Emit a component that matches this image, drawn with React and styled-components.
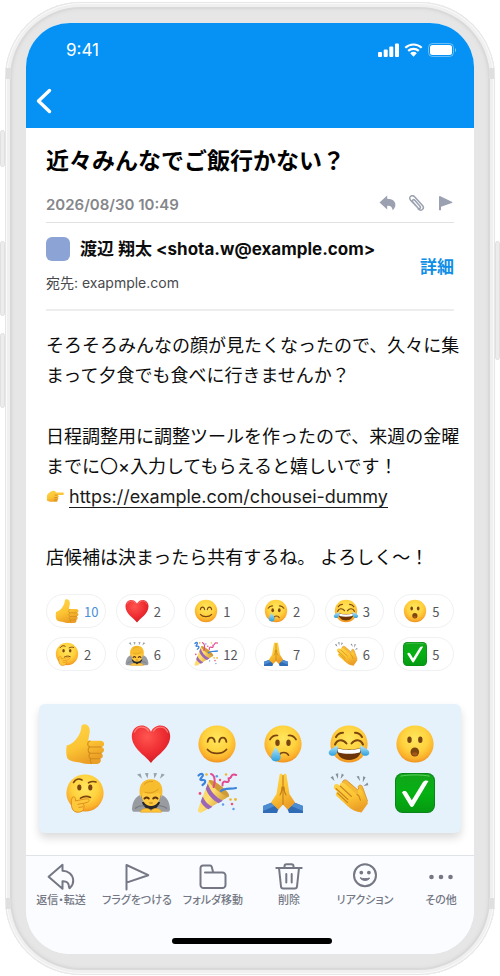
import React, { useState } from "react";
import styled, { createGlobalStyle } from "styled-components";

const GlobalStyle = createGlobalStyle`
  * {
    box-sizing: border-box;
  }

  body {
    margin: 0;
    background-color: #ffffff;
    color: #0c0c0c;
    font-family: Inter, "Noto Sans CJK JP", sans-serif;
  }

  button {
    padding: 0;
    border: 0;
    background: none;
    color: inherit;
    font-family: inherit;
    cursor: pointer;
  }
`;

const Page = styled.main`
  display: flex;
  justify-content: center;
  padding: 2px 5px;
`;

const Phone = styled.div`
  position: relative;
  width: 100%;
  max-width: 490px;
  padding: 21px;
  border-radius: 76px;
  background-color: #e6e6e6;
  box-shadow: inset 0 0 0 1px #e6e6e6, inset 0 0 0 2px #fafafa,
    inset 0 0 0 5px #f0f0f0, inset 0 0 1px 7px #d9d9d9,
    inset 0 0 2px 9px #e2e2e2;
`;

const SideKey = styled.span`
  position: absolute;
  top: ${(props) => props.$top}px;
  ${(props) => props.$side}: -5px;
  width: 5px;
  height: ${(props) => props.$height}px;
  border: 1px solid #e0e0e0;
  border-radius: 3px;
  background-color: #ececec;
`;

const Antenna = styled.span`
  position: absolute;
  ${(props) => props.$edge}: 66px;
  ${(props) => props.$side}: 1px;
  width: 5px;
  height: 11px;
  background-color: #dfdfdf;
`;

const Screen = styled.div`
  display: flex;
  flex-direction: column;
  overflow: hidden;
  border-radius: 44px;
  background-color: #ffffff;
`;

const Header = styled.header`
  height: 105px;
  padding: 17px 18px 0 10px;
  background-color: #0592f4;
  color: #ffffff;
`;

const StatusBar = styled.div`
  display: flex;
  align-items: center;
  justify-content: space-between;
  height: 20px;
  padding-left: 30px;
  font-size: 17px;
`;

const StatusIcons = styled.div`
  display: flex;
  align-items: center;
  gap: 5px;
`;

const BackButton = styled.button`
  display: block;
  width: 16px;
  height: 26px;
  margin-top: 28px;
`;

const Article = styled.article`
  padding: 17px 20px 0;
`;

const Title = styled.h1`
  margin: 0;
  font-size: 23px;
  font-weight: 700;
  line-height: 32px;
  color: #000000;
`;

const MetaRow = styled.div`
  display: flex;
  align-items: center;
  justify-content: space-between;
  height: 46px;
  padding-top: 10px;
  border-bottom: 1px solid #e1e1e3;
`;

const SentAt = styled.time`
  font-size: 15px;
  font-weight: 600;
  color: #85868a;
`;

const MetaActions = styled.div`
  display: flex;
  gap: 12px;
  color: #9ba1b0;
`;

const MetaButton = styled.button`
  width: 17px;
  height: 24px;
`;

const SenderRow = styled.div`
  display: flex;
  align-items: center;
  justify-content: space-between;
  height: 88px;
  padding-bottom: 1px;
  border-bottom: 2px solid #ededee;
`;

const Sender = styled.div`
  display: flex;
  flex-direction: column;
  gap: 11px;
`;

const SenderName = styled.div`
  display: flex;
  align-items: center;
  gap: 10px;
  font-size: 17px;
  font-weight: 700;
  line-height: 24px;
  white-space: nowrap;
`;

const Avatar = styled.span`
  width: 24px;
  height: 24px;
  border-radius: 6px;
  background-color: #8ba4d5;
`;

const Recipient = styled.div`
  font-size: 14px;
  line-height: 22px;
  color: #48494d;
`;

const DetailLink = styled.a`
  color: #0f8ee6;
  font-size: 17px;
  font-weight: 700;
  text-decoration: none;
  white-space: nowrap;
`;

const Body = styled.div`
  display: flex;
  flex-direction: column;
  gap: 31px;
  padding-top: 20px;
  font-size: 18px;
  line-height: 30px;
  white-space: nowrap;

  p {
    margin: 0;
  }

  a {
    color: #1c1c1c;
    text-decoration: none;
    border-bottom: 1px solid #1c1c1c;
  }
`;

const Reactions = styled.div`
  display: grid;
  grid-template-columns: repeat(6, 1fr);
  gap: 9px 10px;
  padding-top: 21px;
`;

const Chip = styled.button`
  display: flex;
  align-items: center;
  gap: 5px;
  height: 34px;
  padding-left: 8px;
  border: 1px solid #f0f1f2;
  border-radius: 17px;
  font-family: "Noto Sans CJK JP", sans-serif;
  font-size: 13px;
  color: ${(props) => (props.$active ? "#4a8fd9" : "#55565a")};
`;

const Picker = styled.section`
  display: grid;
  grid-template-columns: repeat(6, 1fr);
  gap: 9px 0;
  margin: 33px 13px 22px;
  padding: 20px 13px;
  border-radius: 6px;
  background-color: #e5f1fb;
  box-shadow: 0 5px 8px rgba(0, 0, 0, 0.14);
`;

const PickerButton = styled.button`
  display: flex;
  justify-content: center;
  height: 40px;
`;

const Toolbar = styled.nav`
  display: grid;
  grid-template-columns: repeat(6, 1fr);
  height: 83px;
  margin: 0 -5px 0 -3px;
  padding-top: 7px;
  border-top: 1px solid #dfe2e6;
  background-color: #fafcff;
`;

const ToolButton = styled.button`
  display: flex;
  flex-direction: column;
  align-items: center;
  justify-self: center;
  gap: 1px;
  height: 46px;
  color: #757884;
  font-size: 11px;
  font-weight: 500;
  line-height: 16px;
  font-feature-settings: "palt";
  white-space: nowrap;
`;

const HomeArea = styled.div`
  display: flex;
  justify-content: center;
  height: 16px;
  padding-left: 3px;
  background-color: #fafcff;
`;

const HomeIndicator = styled.span`
  width: 160px;
  height: 6px;
  border-radius: 3px;
  background-color: #000000;
`;

const EmojiSvg = styled.svg`
  display: block;
  flex: none;
  width: ${(props) => props.$size}px;
  height: ${(props) => props.$size}px;
  overflow: visible;
`;

const InlineEmoji = styled(EmojiSvg)`
  display: inline-block;
  margin-right: 5px;
  vertical-align: -2px;
`;

const Defs = styled.svg`
  position: absolute;
  width: 0;
  height: 0;
`;

function EmojiDefs() {
  return (
    <Defs aria-hidden="true">
      <defs>
        <radialGradient id="face" cx="0.5" cy="0.36" r="0.64">
          <stop offset="0" stopColor="#ffe75e" />
          <stop offset="0.55" stopColor="#ffd23e" />
          <stop offset="0.85" stopColor="#fbb02b" />
          <stop offset="1" stopColor="#ee9220" />
        </radialGradient>
        <linearGradient id="skin" x1="0" y1="0" x2="0.4" y2="1">
          <stop offset="0" stopColor="#ffd54a" />
          <stop offset="0.6" stopColor="#fcc433" />
          <stop offset="1" stopColor="#ec9f26" />
        </linearGradient>
        <radialGradient id="heart" cx="0.4" cy="0.3" r="0.75">
          <stop offset="0" stopColor="#ff5550" />
          <stop offset="0.6" stopColor="#ee2c31" />
          <stop offset="1" stopColor="#cf1b26" />
        </radialGradient>
        <linearGradient id="tear" x1="0" y1="0" x2="0" y2="1">
          <stop offset="0" stopColor="#b9e9fa" />
          <stop offset="1" stopColor="#2c9fdc" />
        </linearGradient>
        <linearGradient id="cone" x1="0" y1="0" x2="1" y2="0.6">
          <stop offset="0" stopColor="#f5cb4c" />
          <stop offset="0.5" stopColor="#ffdf72" />
          <stop offset="1" stopColor="#cf962a" />
        </linearGradient>
        <linearGradient id="check" x1="0" y1="0" x2="0" y2="1">
          <stop offset="0" stopColor="#13a51c" />
          <stop offset="0.5" stopColor="#04b112" />
          <stop offset="1" stopColor="#069a12" />
        </linearGradient>
      </defs>
    </Defs>
  );
}

const brown = "#7a4510";

const face = <circle cx="20" cy="20" r="18.6" fill="url(#face)" />;

const drawings = {
  thumb: (
    <>
      <path
        d="M1.7 21.5C6 20.5 9.500 17.500 12 14c2.600-3.600 4-6.600 4.200-10.500C16.400 1 18 0 20 .3c3.600.6 5 3.700 4.700 7.700-.3 3.300-1.200 5.800-1.400 8.700H35c5.200 0 5.300 5.700 1.500 6.300 3.600.8 3.300 5.800-.4 6.200 2.600 1.200 2.200 5.200-1 5.600 1.600 1.400.7 4.700-3.100 5.100-6.500.4-12.700.2-17-1.300-5-.7-9-1-12.200-3.600C.9 31.500 1 26 1.700 21.500Z"
        fill="url(#skin)"
      />
      <path
        d="M25 17c-3 .8-3.200 5 0 6-2.600 1-2.500 5.200.4 6.200-2.200 1.200-1.900 4.800.6 5.600-1.200 1-1 3.500.6 4.500M25 23h11M25.400 29.200H36M26 34.800h9"
        fill="none"
        stroke="#cf8a1c"
        strokeWidth="1.1"
        strokeLinecap="round"
      />
    </>
  ),
  heart: (
    <>
      <path
        d="M20 39C15 32 .8 24.500.8 12.300.8 6 5.200 1.500 10.600 1.500c4.200 0 7.500 2.300 9.400 6.200 1.900-3.900 5.200-6.200 9.400-6.200 5.400 0 9.800 4.500 9.800 10.800C39.200 24.500 25 32 20 39Z"
        fill="url(#heart)"
      />
      <path
        d="M3.500 8C5 4.700 7.500 3.200 10.500 3.200c3 0 5.500 1.300 7 3.800M22.500 7c1.600-2.600 4-3.800 7-3.800s5.500 1.500 7 4.800"
        fill="none"
        stroke="#ff9c94"
        strokeWidth="1.3"
        strokeLinecap="round"
        opacity="0.7"
      />
    </>
  ),
  smile: (
    <>
      {face}
      <path
        d="M10.600 17.800c.8-5.700 6.400-5.700 7.200 0M22.200 17.800c.8-5.700 6.400-5.700 7.200 0M10.500 25.500c4.500 5.200 14.500 5.200 19 0"
        fill="none"
        stroke={brown}
        strokeWidth="1.800"
        strokeLinecap="round"
      />
    </>
  ),
  cry: (
    <>
      {face}
      <g fill={brown}>
        <ellipse cx="14.500" cy="18.800" rx="2.200" ry="3.300" />
        <ellipse cx="25.500" cy="18.800" rx="2.200" ry="3.300" />
      </g>
      <path
        d="M7 15.500c2-3.200 4.500-4.300 7.500-4M25.500 11.500c3-.3 5.500.8 7.500 4M16 31.200c2-3.600 7.500-3.600 9.500 0"
        fill="none"
        stroke={brown}
        strokeWidth="1.700"
        strokeLinecap="round"
      />
      <path
        d="M12.800 22.500c2 4 4.900 7.500 4.900 10.300 0 2.800-2.300 4.700-4.900 4.700S8 35.600 8 32.800c0-2.800 2.900-6.300 4.800-10.300Z"
        fill="url(#tear)"
      />
    </>
  ),
  laugh: (
    <>
      {face}
      <path
        d="M7 13c1.500-2.800 4-4.200 7-4.200M26 8.800c3 0 5.500 1.400 7 4.200M6 20.500c2.500-5.500 8-5.500 11.500-1M22.500 19.500c3.500-4.500 9-4.500 11.500 1"
        fill="none"
        stroke={brown}
        strokeWidth="2"
        strokeLinecap="round"
      />
      <path d="M7.500 23.500c8 2.700 17 2.700 25 0 .5 7-4.500 12.500-12.500 12.500S7 30.500 7.500 23.500Z" fill="#6d3507" />
      <path d="M8.500 24.300c7 2.200 16 2.200 23 0 .1 1.600-.2 2.900-.8 4.200-6.500 1.700-14.900 1.700-21.400 0-.6-1.300-.9-2.600-.8-4.200Z" fill="#ffffff" />
      <path
        d="M8.500 21.300c.6 4 .3 8.300-2.600 9.900-2.200 1.200-5 .6-6-1.500-1.300-3.500 4.300-5.700 8.600-8.400ZM31.500 21.300c-.6 4-.3 8.300 2.600 9.900 2.200 1.200 5 .6 6-1.500 1.300-3.500-4.300-5.700-8.600-8.400Z"
        fill="url(#tear)"
      />
    </>
  ),
  wow: (
    <>
      {face}
      <g fill={brown}>
        <ellipse cx="14.500" cy="15.800" rx="2.200" ry="3.200" />
        <ellipse cx="25.300" cy="15.800" rx="2.200" ry="3.200" />
        <ellipse cx="19.800" cy="28" rx="4.300" ry="4.600" />
      </g>
      <ellipse cx="19.800" cy="30" rx="2.800" ry="1.800" fill="#a5571a" />
    </>
  ),
  think: (
    <>
      {face}
      <g fill={brown}>
        <ellipse cx="14.300" cy="14.500" rx="2.100" ry="3" />
        <ellipse cx="25.300" cy="14.500" rx="2.100" ry="3" />
      </g>
      <path
        d="M8.500 9.500c2-3.300 5.500-4.200 8.500-2.500M23.500 9.800c2.500-1.300 5-1.600 7.500-.8M15.500 25.200c3-2 6.500-2.500 10-.7"
        fill="none"
        stroke={brown}
        strokeWidth="1.600"
        strokeLinecap="round"
      />
      <path
        d="M6.500 32.500c-.4-3.400-.2-7.200 1.200-8.400 1.900-1 2.900.8 2.800 3.800 3.800-.6 8.800-2.300 12-2.100 2.600.3 2.200 2.800-.2 3.500l-4.800 1.400c1.300.9 1.800 2.100 1.300 3.500.4 3.500-3.100 5.300-6.800 5-3.500-.3-5.200-3.300-5.500-6.700Z"
        fill="#ffc83a"
        stroke="#dd8f1f"
        strokeWidth="1"
      />
      <path d="M12.500 31.500l5-1.200M13.500 34.500l4.500-.8" stroke="#dd8f1f" strokeWidth="1" />
    </>
  ),
  bow: (
    <>
      <path
        d="M6 1.500l3.600-1 1.400 5.200ZM13.800.3l3.600-.3-.8 5.500ZM22.600 0l3.600.3-2.800 5.200ZM30.600.5l3.200 1.200-4.900 4.100Z"
        fill="#98a2a9"
      />
      <path
        d="M9.500 22C4 23.500 1.200 30 1 36c0 2 1 2.800 3 2.800h32c2 0 3-.8 3-2.800-.2-6-3-12.500-8.500-14Z"
        fill="#989ca1"
      />
      <path d="M11 29c1.500 5.500 5 7.500 9 7.500s7.500-2 9-7.500Z" fill="#29272a" />
      <path d="M4 35.500c3-2.500 6-3.200 9.500-2.500M36 35.500c-3-2.500-6-3.200-9.500-2.500" fill="none" stroke="#767b81" strokeWidth="1.200" />
      <path
        d="M10.500 18c-.5 9.500 3.500 15 9.500 15s10-5.500 9.500-15Z"
        fill="#ffc93e"
      />
      <path
        d="M9.500 25C6.500 14 10.500 6.300 20 6.300S33.500 14 30.500 25c-.6-2.600-1.500-4-3-5.200-5.500 2-11.500 1.500-14.500-.8-1.500 1.500-2.800 3.200-3.500 6Z"
        fill="#f7bd2e"
      />
      <path
        d="M13.500 19.200c5 1.500 10 .5 14-3.200M13 11.500c2.500-2.500 5.500-3.500 9-3"
        fill="none"
        stroke="#d9951f"
        strokeWidth="0.900"
      />
      <path
        d="M13.500 25.500c1.300-1.200 3-1.200 4.300 0M22.200 25.500c1.300-1.200 3-1.200 4.300 0"
        fill="none"
        stroke="#5c3110"
        strokeWidth="1.900"
        strokeLinecap="round"
      />
      <path d="M18.300 30h3.400" stroke="#b56b18" strokeWidth="1.100" />
      <path
        d="M9.500 39.200c0-4.200 8.500-5 10-1.800l.5.700.5-.7c1.500-3.200 10-2.400 10 1.800Z"
        fill="#ffc535"
        stroke="#df9a26"
        strokeWidth="0.600"
      />
    </>
  ),
  party: (
    <>
      <path
        d="M1 36.500 11.800 7.500C15 4 34.500 20 31.800 23.500L4.500 39.500C2.500 40.500.300 38.500 1 36.500Z"
        fill="url(#cone)"
      />
      <path
        d="M10.800 10.500c2.500 7.500 8 14 15 17.200l-4.300 2.500C15.500 27 11 22 8.800 15.800ZM5.700 23.500c2 4.700 5.300 8.500 9.800 10.300l-4 2.400c-3.500-1.600-6.200-4.300-7.800-7.800Z"
        fill="#9b66b8"
      />
      <path d="M11.800 7.500c2.500-3.300 22.500 12.500 20 16-3.500 1-19.500-11.500-20-16Z" fill="#cf9a38" />
      <path
        d="M1.500 2.500c3-3 5.500-1.500 3.800 1C3.600 6 1.500 7.500 6 7c3-.3 3 3-.5 5M24 18c4.500-4 8.500-1.500 15-3"
        fill="none"
        stroke="#3c83dc"
        strokeWidth="2.200"
        strokeLinecap="round"
      />
      <path
        d="M14 1c4.200 1 4.500 8.500 2.500 13M25.500 12.500c-.5-4 2-4.500 4.200-3.500 2.500.8 3-3.500 1-3.500 3 .5 3.500-1.500 4-3 1.200-2 2.800-1 4.500-.5"
        fill="none"
        stroke="#e34b91"
        strokeWidth="2"
        strokeLinecap="round"
      />
      <g fill="#5b9be8">
        <circle cx="19.800" cy="3.200" r="1.300" />
        <circle cx="26" cy="31.500" r="1.200" />
        <circle cx="36.500" cy="36" r="1.200" />
      </g>
      <g fill="#ea5178">
        <circle cx="3" cy="20.500" r="1.400" />
        <circle cx="23" cy="7" r="1.200" />
        <circle cx="35" cy="31" r="1.300" />
      </g>
      <g fill="#f0b52f">
        <circle cx="9.500" cy="1.500" r="1.300" />
        <circle cx="38.500" cy="26.500" r="1.400" />
        <circle cx="33.500" cy="26.500" r="1.300" />
        <circle cx="29" cy="1.500" r="1.200" />
      </g>
    </>
  ),
  pray: (
    <>
      <path d="M0 33 10 29l5.500 7-1.500 4H0ZM40 33 30 29l-5.500 7 1.500 4h14Z" fill="#2f6cb5" />
      <path d="M0 33 10 29l3 3.500L0 38ZM40 33 30 29l-3 3.500L40 38Z" fill="#4c8cd3" />
      <path
        d="M20 2.500C19 .2 16.700.2 16.400 2.800L13.500 21 8 29.500l7.300 7.300L20 31.500l4.700 5.300L32 29.500 26.500 21 23.600 2.800C23.300.2 21 .2 20 2.500Z"
        fill="url(#skin)"
      />
      <path
        d="M20 2.500V31.500M17 22c1.500-2 2-4.500 2-8M23 22c-1.500-2-2-4.500-2-8"
        fill="none"
        stroke="#c47d1c"
        strokeWidth="1.100"
        strokeLinecap="round"
      />
    </>
  ),
  clap: (
    <>
      <path
        d="M1.500 4.500 4 3l1.500 5ZM6.500 1l2.700-.8L9 6ZM12.800.5 15 2l-3.500 4ZM27.500 3.500 30 3l1.200 5.200ZM34 3.200l2.600 1-2.800 5.300ZM38.500 9.500l.8 2.700-4.800.8Z"
        fill="#87909a"
      />
      <path
        d="M13.500 10.500C12.800 7 16.500 5.800 18.500 8L30 18l-.8-3.800c.2-3 4-2.600 4.500.3L38.500 28 34 34Z"
        fill="#f5b834"
        stroke="#d28c20"
        strokeWidth="0.800"
      />
      <path
        d="M5.200 12.500c1.500-2.700 4.300-1.300 6 .5-.8-3.200 2-4.600 4.300-2.500L28 21.500l1.800 1.300-1-4.500c0-3 3.700-3 4.400 0 .8 5.500 4.300 8.700 5.800 12L32.500 39.500c-5.500-1-10-2.500-14-6.500L7.800 23.300c-2.300-2.500-.2-5 1.700-3.700-3.500-2.600-5.500-4.600-4.300-7.100Z"
        fill="url(#skin)"
      />
      <path
        d="M11.200 13 22.500 23.500M7 15.500l12 11M8.500 20l10 9.500M28 21.500l1.800 1.300 1.700 4.500"
        fill="none"
        stroke="#cc861d"
        strokeWidth="1.100"
        strokeLinecap="round"
      />
    </>
  ),
  done: (
    <>
      <rect x="0" y="0" width="40" height="40" rx="7.500" fill="#098618" />
      <rect x="1" y="1" width="38" height="38" rx="6.500" fill="url(#check)" />
      <path d="M5.500 3.200C12 1.500 28 1.500 34.500 3.200" stroke="#5ccf61" strokeWidth="1" fill="none" />
      <path d="M7 19.500c1.500-2 4-2 5.200.2l4.600 7.500L28 9c1-1.600 3.500-2 5.500-1L18.500 33c-.8 1.300-2.500 1.300-3.300 0Z" fill="#ffffff" />
    </>
  ),
  point: (
    <>
      <path
        d="M2 19c3-5 8-9.500 14-10.500 2.500-.5 5.500 1 6.500 3.500H37c3.500 0 3.500 6 0 6H26c3.500 1.500 3 5 0 5.500 2.500 1.500 2 5-1 5.300 1.500 1.500.5 4.200-2.500 4.200H13c-4 0-8-1-11-3Z"
        fill="url(#skin)"
      />
      <path d="M19 18h7M18 23.500h8M18 28.800h7" stroke="#c8811c" strokeWidth="1.600" />
    </>
  ),
};

function Emoji({ name, size, label }) {
  return (
    <EmojiSvg $size={size} viewBox="0 0 40 40" role="img" aria-label={label}>
      {drawings[name]}
    </EmojiSvg>
  );
}

const emojis = [
  { name: "thumb", label: "いいね", count: 10 },
  { name: "heart", label: "ハート", count: 2 },
  { name: "smile", label: "笑顔", count: 1 },
  { name: "cry", label: "泣き顔", count: 2 },
  { name: "laugh", label: "大笑い", count: 3 },
  { name: "wow", label: "驚き", count: 5 },
  { name: "think", label: "考え中", count: 2 },
  { name: "bow", label: "お辞儀", count: 6 },
  { name: "party", label: "お祝い", count: 12 },
  { name: "pray", label: "お願い", count: 7 },
  { name: "clap", label: "拍手", count: 6 },
  { name: "done", label: "完了", count: 5 },
];

const tools = [
  {
    label: "返信・転送",
    icon: (
      <path d="M15.500 1.800 1.600 13.800 15.500 25.800V18.300C20 18 21.800 20 22 24c.1 1.300.5 1.500 1.300.6C25 22.800 26.500 20 26.200 17 25.700 11.500 21 7.800 15.500 7.800Z" />
    ),
  },
  {
    label: "フラグをつける",
    icon: <path d="M3.500 26.500V2L25.300 12.200 3.500 19.600" />,
  },
  {
    label: "フォルダ移動",
    icon: (
      <path d="M6 9.500h17.500A3 3 0 0 1 26.500 12.500V22a3 3 0 0 1-3 3h-19a3 3 0 0 1-3-3V5a2.500 2.500 0 0 1 2.500-2.500h7.200c.8 0 1.300.5 1.500 1.200L14.200 9.500" />
    ),
  },
  {
    label: "削除",
    icon: (
      <path d="M1.300 5h25.400M9.500 5V3.200c0-1.100.9-2 2-2h5c1.100 0 2 .9 2 2V5M4 5l2 18.500c.1 1.300 1 2 2.200 2h11.600c1.200 0 2.100-.7 2.200-2L24 5M11.300 11v8.500M16.700 11v8.500" />
    ),
  },
  {
    label: "リアクション",
    icon: (
      <>
        <circle cx="14" cy="12.300" r="11" />
        <circle cx="10.300" cy="9.600" r="0.900" />
        <circle cx="17.900" cy="9.600" r="0.900" />
        <path d="M9.500 15c3 .9 6 .9 9 0-.8 3.300-8.200 3.300-9 0Z" fill="currentColor" strokeWidth="1" />
      </>
    ),
  },
  {
    label: "その他",
    icon: (
      <g fill="currentColor" stroke="none">
        <circle cx="4.500" cy="14" r="2.300" />
        <circle cx="14" cy="14" r="2.300" />
        <circle cx="23.500" cy="14" r="2.300" />
      </g>
    ),
  },
];

function StatusGlyphs() {
  return (
    <StatusIcons aria-hidden="true">
      <svg width="21" height="14" viewBox="0 0 21 14" fill="currentColor">
        <rect x="0" y="9" width="4" height="5" rx="1" />
        <rect x="5.700" y="6.500" width="4" height="7.500" rx="1" />
        <rect x="11.300" y="3.500" width="4" height="10.500" rx="1" />
        <rect x="17" y="0.500" width="4" height="13.500" rx="1" />
      </svg>
      <svg width="19" height="14" viewBox="0 0 19 14">
        <path
          d="M1.300 4.800a11.800 11.800 0 0 1 16.400 0M4.200 7.900a7.700 7.700 0 0 1 10.600 0"
          fill="none"
          stroke="currentColor"
          strokeWidth="2.200"
        />
        <path d="M6.200 10.200a4.700 4.700 0 0 1 6.600 0L9.500 13.800Z" fill="currentColor" />
      </svg>
      <svg width="28" height="14" viewBox="0 0 28 14">
        <rect x="0.500" y="0.500" width="25" height="13" rx="4" fill="none" stroke="#ffffff" opacity="0.400" />
        <rect x="2" y="2" width="22" height="10" rx="2.500" fill="#ffffff" />
        <path d="M27 5c1.300.8 1.300 3.400 0 4.200Z" fill="#ffffff" opacity="0.500" />
      </svg>
    </StatusIcons>
  );
}

function MailScreen() {
  const [picked, setPicked] = useState("thumb");

  return (
    <Screen>
      <Header>
        <StatusBar>
          <span>9:41</span>
          <StatusGlyphs />
        </StatusBar>
        <BackButton aria-label="戻る">
          <svg width="16" height="26" viewBox="0 0 16 26">
            <path
              d="M13.500 2.500 2.500 13l11 10.500"
              fill="none"
              stroke="#ffffff"
              strokeWidth="3.400"
              strokeLinecap="round"
              strokeLinejoin="round"
            />
          </svg>
        </BackButton>
      </Header>
      <Article>
        <Title>近々みんなでご飯行かない？</Title>
        <MetaRow>
          <SentAt>2026/08/30 10:49</SentAt>
          <MetaActions>
            <MetaButton aria-label="返信">
              <svg width="17" height="17" viewBox="0 0 17 17" fill="currentColor">
                <path d="M8.200.6.500 7.500l7.700 7V10.700c3.400-.2 5 1.200 5.500 4.500 4.800-4.500 3.300-11.200-5.500-11.400Z" />
              </svg>
            </MetaButton>
            <MetaButton aria-label="添付ファイル">
              <svg width="17" height="17" viewBox="0 0 17 17" fill="none">
                <path
                  d="M6.800 5.200 12 11.300c1.300 1.600-.7 3.200-2 1.800L2.600 5.300C-.2 1.800 4.200-.9 6.800 1.900l7.700 8.600c2.500 3.100-1.300 6.400-4.300 3.500M10 13.100 5 7.300C3.500 5.500 5.300 3.800 6.800 5.200"
                  stroke="currentColor"
                  strokeWidth="1.500"
                  strokeLinecap="round"
                />
              </svg>
            </MetaButton>
            <MetaButton aria-label="フラグ">
              <svg width="17" height="17" viewBox="0 0 17 17" fill="currentColor">
                <path d="M2 2c0-.8.600-1.200 1.400-.8L14.800 6.700c.7.400.7 1 0 1.300L4 11.800V14.500c0 1.200-2 1.200-2 0Z" />
              </svg>
            </MetaButton>
          </MetaActions>
        </MetaRow>
        <SenderRow>
          <Sender>
            <SenderName>
              <Avatar />
              <span>渡辺 翔太 &lt;shota.w@example.com&gt;</span>
            </SenderName>
            <Recipient>宛先: exapmple.com</Recipient>
          </Sender>
          <DetailLink href="#detail">詳細</DetailLink>
        </SenderRow>
        <Body>
          <p>
            そろそろみんなの顔が見たくなったので、久々に集
            <br />
            まって夕食でも食べに行きませんか？
          </p>
          <p>
            日程調整用に調整ツールを作ったので、来週の金曜
            <br />
            までに〇×入力してもらえると嬉しいです！
            <br />
            <InlineEmoji $size={18} viewBox="0 0 40 40" aria-hidden="true">
              {drawings.point}
            </InlineEmoji>
            <a href="#chousei">https://example.com/chousei-dummy</a>
          </p>
          <p>店候補は決まったら共有するね。 よろしく〜！</p>
        </Body>
        <Reactions>
          {emojis.map((emoji) => (
            <Chip
              key={emoji.name}
              $active={picked === emoji.name}
              onClick={() => setPicked(emoji.name)}
            >
              <Emoji name={emoji.name} label={emoji.label} size={24} />
              {emoji.count}
            </Chip>
          ))}
        </Reactions>
      </Article>
      <Picker>
        {emojis.map((emoji) => (
          <PickerButton key={emoji.name} onClick={() => setPicked(emoji.name)}>
            <Emoji name={emoji.name} label={emoji.label} size={40} />
          </PickerButton>
        ))}
      </Picker>
      <Toolbar>
        {tools.map((tool) => (
          <ToolButton key={tool.label}>
            <svg
              width="28"
              height="28"
              viewBox="0 0 28 28"
              fill="none"
              stroke="currentColor"
              strokeWidth="2"
              strokeLinecap="round"
              strokeLinejoin="round"
            >
              {tool.icon}
            </svg>
            {tool.label}
          </ToolButton>
        ))}
      </Toolbar>
      <HomeArea>
        <HomeIndicator />
      </HomeArea>
    </Screen>
  );
}

function App() {
  return (
    <Page>
      <GlobalStyle />
      <EmojiDefs />
      <Phone>
        <SideKey $side="left" $top={128} $height={37} />
        <SideKey $side="left" $top={239} $height={75} />
        <SideKey $side="left" $top={331} $height={75} />
        <SideKey $side="right" $top={239} $height={119} />
        <Antenna $side="left" $edge="top" />
        <Antenna $side="right" $edge="top" />
        <Antenna $side="left" $edge="bottom" />
        <Antenna $side="right" $edge="bottom" />
        <MailScreen />
      </Phone>
    </Page>
  );
}

export default App;
